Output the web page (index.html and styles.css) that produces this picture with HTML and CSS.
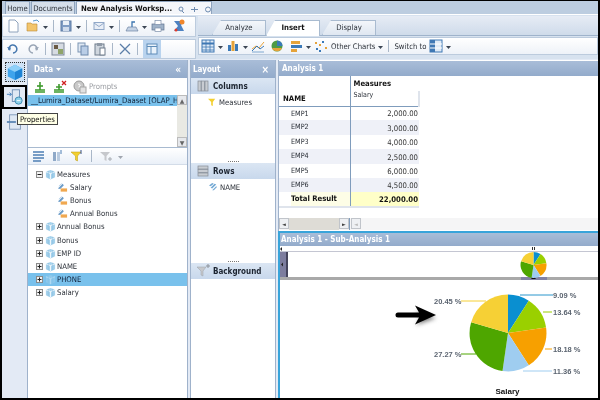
FILE: index.html
```html
<!DOCTYPE html>
<html lang="en">
<head>
<meta charset="utf-8">
<title>New Analysis Workspace</title>
<link rel="stylesheet" href="styles.css">
</head>
<body>
<svg class="sprites" width="0" height="0" aria-hidden="true">
  <defs>
    <symbol id="cube" viewBox="0 0 12 12"><path d="M1 3l5-2 5 2v6l-5 2.500-5-2.500z" fill="#a6d2ec"/><path d="M1 3l5 2 5-2M6 5v6" stroke="#fff" stroke-width=".9" fill="none"/><path d="M3.500 2v8M8.500 2v8" stroke="#7db8dc" stroke-width=".6"/></symbol>
    <symbol id="measure" viewBox="0 0 12 12"><path d="M1 7l5-5 1.500 1.500-4 4z" fill="#6c9cc8"/><path d="M2 4.500l3-3" stroke="#b9d3ea"/><rect x="4" y="7" width="7" height="3.500" fill="#f0a850"/></symbol>
    <symbol id="arrowd" viewBox="0 0 5 3"><path d="M0 0h5L2.500 3z" fill="#3c4654"/></symbol>
    <symbol id="plus" viewBox="0 0 7 7"><rect x=".5" y=".5" width="6" height="6" fill="#f2f2f2" stroke="#8a8a8a"/><path d="M1.500 3.500h4M3.500 1.500v4" stroke="#222"/></symbol>
    <symbol id="minus" viewBox="0 0 7 7"><rect x=".5" y=".5" width="6" height="6" fill="#f2f2f2" stroke="#8a8a8a"/><path d="M1.500 3.500h4" stroke="#222"/></symbol>
    <symbol id="pie" viewBox="-104 -104 208 208">
      <path d="M0 0V-100A100 100 0 0 1 54-84.100z" fill="#0a8fd0"/>
      <path d="M0 0L54-84.100A100 100 0 0 1 99-14.300z" fill="#9ad000"/>
      <path d="M0 0L99-14.300A100 100 0 0 1 54 84.100z" fill="#f7a000"/>
      <path d="M0 0L54 84.100A100 100 0 0 1-14.300 99z" fill="#9fcdf0"/>
      <path d="M0 0L-14.300 99A100 100 0 0 1-95.900-28.200z" fill="#4ea600"/>
      <path d="M0 0L-95.900-28.200A100 100 0 0 1 0-100z" fill="#f6d035"/>
    </symbol>
  </defs>
</svg>
<div class="app">
  <header class="tabs">
    <span class="tab tab-home">Home</span>
    <span class="tab tab-docs">Documents</span>
    <span class="tab tab-active"><b>New Analysis Worksp...</b>
      <svg class="tab-ic" viewBox="0 0 36 7"><circle cx="3" cy="3" r="2" fill="none" stroke="#6d8bb0"/><path d="M4 5l2 2" stroke="#6d8bb0"/><path d="M13 3.500h7M16.500 1v5" stroke="#6d8bb0"/><circle cx="30" cy="3.500" r="2.500" fill="none" stroke="#6d8bb0"/></svg>
    </span>
  </header>

  <section class="tools">
    <div class="tools-left">
      <div class="bar">
        <svg class="ic" viewBox="0 0 14 14"><path d="M3 1h6l3 3v9H3z" fill="#fff" stroke="#8ea2bc"/></svg>
        <svg class="ic ic-gap" viewBox="0 0 14 14"><path d="M1 12V4h4l1 1h5v7z" fill="#f3c56c" stroke="#b8893a" stroke-width=".6"/><path d="M7 2l4-1 2 2" stroke="#5a9ad0" fill="none"/></svg>
        <svg class="ar"><use href="#arrowd"/></svg><i class="sep"></i>
        <svg class="ic" viewBox="0 0 14 14"><rect x="2" y="2" width="10" height="10" fill="#7f9cc4" stroke="#5d7ba4"/><rect x="4" y="2" width="6" height="4" fill="#eaf0f8"/><rect x="4" y="8" width="6" height="4" fill="#cfdbec"/></svg>
        <svg class="ar"><use href="#arrowd"/></svg><i class="sep"></i>
        <svg class="ic" viewBox="0 0 14 14"><rect x="2" y="3.500" width="10" height="7" fill="#e9eef6" stroke="#91a8c8"/><path d="M2 4l5 3.500L12 4" fill="none" stroke="#91a8c8"/></svg>
        <svg class="ar"><use href="#arrowd"/></svg><i class="sep"></i>
        <svg class="ic" viewBox="0 0 14 14"><path d="M1 12l2-4h8l2 4z" fill="#c4d2e4" stroke="#6d84a4" stroke-width=".7"/><path d="M7 8V3h3" stroke="#3c76b0" fill="none" stroke-width="1.300"/></svg>
        <svg class="ar"><use href="#arrowd"/></svg>
        <svg class="ic ic-print" viewBox="0 0 14 14"><rect x="1" y="5" width="12" height="6" fill="#9fb2c8" stroke="#5f7390" stroke-width=".7"/><rect x="4" y="1.500" width="6" height="4" fill="#fff" stroke="#7b8ea8" stroke-width=".7"/><rect x="4" y="9" width="6" height="3.500" fill="#fff" stroke="#7b8ea8" stroke-width=".7"/></svg>
        <svg class="ic ic-wiz" viewBox="0 0 14 14"><path d="M2 2h10L9 6l3 6H2l4-5z" fill="#4d82c2"/><circle cx="10" cy="3" r="2.500" fill="#f0862a"/><circle cx="4" cy="11" r="1.500" fill="#e23a2a"/></svg>
      </div>
      <div class="bar">
        <svg class="ic" viewBox="0 0 14 14"><path d="M3 8a4 4 0 1 1 4 3" fill="none" stroke="#4577ae" stroke-width="1.500"/><path d="M1 5l4 .5-1 3.500z" fill="#4577ae"/></svg>
        <svg class="ic ic-gap" viewBox="0 0 14 14"><path d="M11 8a4 4 0 1 0-4 3" fill="none" stroke="#9aa6b6" stroke-width="1.500"/><path d="M13 5l-4 .5 1 3.500z" fill="#9aa6b6"/></svg>
        <i class="sep"></i>
        <svg class="ic" viewBox="0 0 14 14"><rect x="1" y="1" width="12" height="12" fill="#d6dbe2" stroke="#7c8797"/><rect x="3" y="3" width="4" height="4" fill="#6a5a44"/><rect x="7" y="7" width="5" height="5" fill="#8fa46a"/></svg>
        <i class="sep"></i>
        <svg class="ic" viewBox="0 0 14 14"><rect x="2" y="1" width="7" height="9" fill="#dfe8f3" stroke="#7c95b4"/><rect x="5" y="4" width="7" height="9" fill="#b9cde6" stroke="#6d88ab"/></svg>
        <svg class="ic" viewBox="0 0 14 14"><rect x="2" y="2" width="9" height="11" fill="#cfd6de" stroke="#6f7c8c"/><rect x="4" y="1" width="5" height="3" fill="#8e99a6"/><rect x="7" y="6" width="5" height="7" fill="#fff" stroke="#6f7c8c"/></svg>
        <i class="sep"></i>
        <svg class="ic" viewBox="0 0 14 14"><path d="M2 2l10 10M12 2L2 12" stroke="#5b7ea8" stroke-width="1.300"/></svg>
        <i class="sep"></i>
        <span class="toggled"><svg class="ic" viewBox="0 0 14 14"><rect x="2" y="2" width="10" height="10" fill="#e9f2fb" stroke="#5e8cb8"/><path d="M2 4.500h10M6 4.500V12" stroke="#5e8cb8"/></svg></span>
      </div>
    </div>
    <div class="tools-right">
      <nav class="ribbon-tabs">
        <span class="rtab">Analyze</span>
        <span class="rtab rtab-active">Insert</span>
        <span class="rtab">Display</span>
      </nav>
      <div class="bar bar-wide">
        <svg class="ic" viewBox="0 0 14 14"><rect x="1" y="1" width="12" height="12" fill="#dfeaf6" stroke="#3f78b4"/><path d="M1 4.500h12" stroke="#3f78b4" stroke-width="2"/><path d="M1 8h12M1 11h12M5 1v12M9 1v12" stroke="#3f78b4" stroke-width=".8"/></svg>
        <svg class="ar"><use href="#arrowd"/></svg>
        <svg class="ic" viewBox="0 0 14 14"><rect x="2" y="6" width="3" height="6" fill="#3a79b8"/><rect x="5.500" y="2" width="3" height="10" fill="#e5a33a"/><rect x="9" y="5" width="3" height="7" fill="#3a79b8"/></svg>
        <svg class="ar"><use href="#arrowd"/></svg>
        <svg class="ic" viewBox="0 0 14 14"><path d="M1 10l4-3 3 2 5-6" fill="none" stroke="#e8a33a"/><path d="M1 12l5-5 3 3 4-3" fill="none" stroke="#3a79b8"/><path d="M1 13h12" stroke="#7fa8d0"/></svg>
        <svg class="ic ic-sp" viewBox="0 0 14 14"><circle cx="7" cy="7" r="5.500" fill="#4d9a44"/><path d="M7 7V1.500A5.500 5.500 0 0 1 12.500 7z" fill="#3a79b8"/><path d="M2 9h10a5.500 5.500 0 0 1-10 0z" fill="#e5a33a"/></svg>
        <svg class="ic ic-sp" viewBox="0 0 14 14"><rect x="2" y="2" width="9" height="3" fill="#e5a33a"/><rect x="2" y="6" width="11" height="3" fill="#3a79b8"/><rect x="2" y="10" width="6" height="3" fill="#e5a33a"/></svg>
        <svg class="ar"><use href="#arrowd"/></svg>
        <svg class="ic" viewBox="0 0 14 14"><g fill="#3a79b8"><rect x="2" y="9" width="2" height="2"/><rect x="8" y="2" width="2" height="2"/><rect x="5" y="11" width="2" height="2"/></g><g fill="#e5a33a"><rect x="5" y="5" width="2" height="2"/><rect x="11" y="8" width="2" height="2"/><rect x="1" y="3" width="2" height="2"/></g></svg>
        <span class="bar-label">Other Charts</span>
        <svg class="ar"><use href="#arrowd"/></svg><i class="sep"></i>
        <span class="bar-label">Switch to</span>
        <svg class="ic" viewBox="0 0 14 14"><rect x="1" y="1" width="12" height="12" fill="#dfeaf6" stroke="#3f78b4"/><rect x="1" y="1" width="5" height="12" fill="#3f78b4"/><path d="M1 5h12M1 9h12" stroke="#fff"/></svg>
        <svg class="ar"><use href="#arrowd"/></svg>
      </div>
    </div>
  </section>

  <main class="main">
    <aside class="rail">
      <span class="rail-btn rail-cube"><svg viewBox="0 0 20 20"><path d="M2 6l8-4 8 4v9l-8 4-8-4z" fill="#3fa4ec"/><path d="M2 6l8 4 8-4-8-4z" fill="#8fd0f8"/><path d="M10 10v9l8-4V6z" fill="#1f84d4"/></svg></span>
      <span class="rail-btn rail-sel"><svg viewBox="0 0 20 20"><rect x="7" y="2" width="8" height="13" fill="#dfe8f3" stroke="#6d8db4"/><path d="M1 7h5M4 5l2 2-2 2" stroke="#3a79b8" fill="none"/><circle cx="14" cy="14" r="4" fill="#8fd0e8" stroke="#3a88b0"/><path d="M12 14h4" stroke="#fff"/></svg></span>
      <span class="rail-btn rail-last"><svg viewBox="0 0 20 20"><rect x="4" y="2" width="12" height="16" fill="#dfe8f3" stroke="#7e97b8"/><path d="M1 10h10" stroke="#5c86b4" stroke-width="2"/></svg></span>
    </aside>

    <section class="panel data">
      <h2 class="phead">Data <svg class="caret" viewBox="0 0 5 3"><path d="M0 0h5L2.500 3z" fill="#fff"/></svg><span class="ph-act">«</span></h2>
      <div class="subbar">
        <svg class="ic" viewBox="0 0 14 14"><path d="M7 2v8M2 10h10M2 12h10" stroke="#3f9a2e" stroke-width="1.600"/><path d="M4 6h6" stroke="#3f9a2e" stroke-width="1.600"/></svg>
        <svg class="ic" viewBox="0 0 14 14"><path d="M6 4v6M1 10h10M1 12h10M3 7h6" stroke="#3f9a2e" stroke-width="1.600"/><path d="M9 1l4 4M13 1L9 5" stroke="#d02020" stroke-width="1.300"/></svg>
        <span class="prompts"><svg class="ic" viewBox="0 0 14 14"><circle cx="6" cy="6" r="5" fill="#c9c9c9" stroke="#9a9a9a"/><rect x="7" y="7" width="6" height="6" fill="#e2e2e2" stroke="#a6a6a6"/><path d="M5 4.500a1.200 1.200 0 1 1 1 2v1" stroke="#fff" fill="none"/></svg>Prompts</span>
      </div>
      <div class="sources">
        <div class="source">__Lumira_Dataset/Lumira_Daaset [OLAP_H</div>
        <div class="vscroll"><i class="sb-btn">▲</i><i class="sb-track"></i><i class="sb-btn">▼</i></div>
      </div>
      <div class="subbar subbar-b">
        <svg class="ic" viewBox="0 0 14 14"><path d="M1 3h11M1 6h11M1 9h11M1 12h8" stroke="#4d7fb4" stroke-width="1.300"/></svg>
        <svg class="ic" viewBox="0 0 14 14"><rect x="2" y="3" width="3" height="9" fill="#8fa9c8"/><rect x="6" y="3" width="3" height="9" fill="#b8cadf"/><path d="M10 1v4" stroke="#4d7fb4"/></svg>
        <svg class="ic" viewBox="0 0 14 14"><path d="M1 3h10L7.500 7v5l-2-1V7z" fill="#f3cf2f" stroke="#b99a10" stroke-width=".5"/><path d="M11 1v4" stroke="#36528a"/></svg>
        <i class="sep"></i>
        <svg class="ic" viewBox="0 0 14 14"><path d="M1 3h10L7.500 7v5l-2-1V7z" fill="#c6c8cc"/><path d="M9 10h4M11 8v4" stroke="#a8acb2"/></svg>
        <svg class="ar ar-faint"><use href="#arrowd"/></svg>
      </div>
      <ul class="tree">
        <li class="row"><svg class="tg"><use href="#minus"/></svg><svg class="node"><use href="#cube"/></svg>Measures</li>
        <li class="row child"><svg class="node"><use href="#measure"/></svg>Salary</li>
        <li class="row child"><svg class="node"><use href="#measure"/></svg>Bonus</li>
        <li class="row child"><svg class="node"><use href="#measure"/></svg>Annual Bonus</li>
        <li class="row"><svg class="tg"><use href="#plus"/></svg><svg class="node"><use href="#cube"/></svg>Annual Bonus</li>
        <li class="row"><svg class="tg"><use href="#plus"/></svg><svg class="node"><use href="#cube"/></svg>Bonus</li>
        <li class="row"><svg class="tg"><use href="#plus"/></svg><svg class="node"><use href="#cube"/></svg>EMP ID</li>
        <li class="row"><svg class="tg"><use href="#plus"/></svg><svg class="node"><use href="#cube"/></svg>NAME</li>
        <li class="row row-sel"><svg class="tg"><use href="#plus"/></svg><svg class="node"><use href="#cube"/></svg>PHONE</li>
        <li class="row"><svg class="tg"><use href="#plus"/></svg><svg class="node"><use href="#cube"/></svg>Salary</li>
      </ul>
    </section>

    <section class="panel layout">
      <h2 class="phead phead-l">Layout<span class="ph-act">×</span></h2>
      <div class="lsec lsec-cols">
        <h3 class="lhead"><svg class="ic" viewBox="0 0 14 14"><rect x="2" y="2" width="3" height="10" fill="#c8ccd2" stroke="#858c96" stroke-width=".7"/><rect x="5.500" y="2" width="3" height="10" fill="#c8ccd2" stroke="#858c96" stroke-width=".7"/><rect x="9" y="2" width="3" height="10" fill="#c8ccd2" stroke="#858c96" stroke-width=".7"/></svg>Columns</h3>
        <div class="litem"><svg class="lic" viewBox="0 0 10 10"><path d="M0 1h9L6 5v5L4 9V5z" fill="#f3cf2f"/></svg>Measures</div>
        <i class="dots"></i>
      </div>
      <div class="lsec lsec-rows">
        <h3 class="lhead"><svg class="ic" viewBox="0 0 14 14"><rect x="2" y="2" width="10" height="3" fill="#c8ccd2" stroke="#858c96" stroke-width=".7"/><rect x="2" y="5.500" width="10" height="3" fill="#c8ccd2" stroke="#858c96" stroke-width=".7"/><rect x="2" y="9" width="10" height="3" fill="#c8ccd2" stroke="#858c96" stroke-width=".7"/></svg>Rows</h3>
        <div class="litem litem-n"><svg class="lic" viewBox="0 0 10 10"><path d="M0 3l4-3 2 1-4 3zM2 6l5-5 2 1-5 5zM4 9l5-5 1 1-4 4z" fill="#72a8d4"/></svg>NAME</div>
        <i class="dots"></i>
      </div>
      <div class="lsec">
        <h3 class="lhead"><svg class="ic" viewBox="0 0 14 14"><path d="M1 3h9L7 7v5l-2-1V7z" fill="#c6c8cc" stroke="#9aa0a8" stroke-width=".5"/><path d="M10 2h4M12 0v4" stroke="#8c929a"/></svg>Background</h3>
      </div>
    </section>

    <section class="panel analysis">
      <h2 class="phead phead-a">Analysis 1</h2>
      <div class="crosstab">
        <table class="grid">
          <thead>
            <tr><th class="t-name" rowspan="2">NAME</th><th class="t-meas">Measures</th></tr>
            <tr><th class="t-sal">Salary</th></tr>
          </thead>
          <tbody>
            <tr><td>EMP1</td><td>2,000.00</td></tr>
            <tr><td>EMP2</td><td>3,000.00</td></tr>
            <tr><td>EMP3</td><td>4,000.00</td></tr>
            <tr><td>EMP4</td><td>2,500.00</td></tr>
            <tr><td>EMP5</td><td>6,000.00</td></tr>
            <tr><td>EMP6</td><td>4,500.00</td></tr>
            <tr class="total"><td>Total Result</td><td>22,000.00</td></tr>
          </tbody>
        </table>
        <div class="hscroll">
          <div class="hs-left"><i class="hs-btn">◄</i><i class="hs-track"></i><i class="hs-btn">►</i></div>
          <div class="hs-right"><i class="hs-btn hs-off">◄</i></div>
        </div>
      </div>
      <div class="sub">
        <h2 class="phead phead-s">Analysis 1 - Sub-Analysis 1</h2>
        <svg class="chart" viewBox="280 246 318 152">
          <rect x="280" y="251" width="318" height="1" fill="#c4c6d2"/>
          <path d="M280 249l2-2v4z" fill="#222"/>
          <path d="M532 247h1v3h-1zM534 247h1v3h-1z" fill="#333"/>
          <rect x="280" y="252" width="6" height="25" fill="#7d7d9e"/>
          <rect x="286" y="252" width="2" height="25" fill="#45455c"/>
          <path d="M281 264.500l2-2v4z" fill="#222"/>
          <rect x="280" y="277" width="318" height="3" fill="#a9a9a9"/>
          <rect x="521" y="277" width="26" height="3" fill="#8282a4"/>
          <path d="M533.500 276l2.500 3h-5z" fill="#111"/>
          <use href="#pie" x="520" y="251.500" width="27" height="27"/>
          <g fill="none">
            <path d="M520 295h33" stroke="#2a96cc"/>
            <path d="M543 312h9" stroke="#9ad000"/>
            <path d="M545 349h7" stroke="#f7a000"/>
            <path d="M523 371h29" stroke="#9fcdf0"/>
            <path d="M461 354h15" stroke="#4ea600"/>
            <path d="M461 301h25" stroke="#f6d035"/>
          </g>
          <use href="#pie" x="468" y="293" width="80" height="80"/>
          <g class="lbl">
            <text x="553" y="298">9.09 %</text>
            <text x="553" y="315">13.64 %</text>
            <text x="553" y="352">18.18 %</text>
            <text x="553" y="374">11.36 %</text>
            <text x="434" y="304">20.45 %</text>
            <text x="434" y="357">27.27 %</text>
          </g>
          <text class="cap" x="507.500" y="394" text-anchor="middle">Salary</text>
          <path class="shadow" d="M398 318h23l-5 7 20-7-20-7 5 7" fill="#777"/>
          <path d="M398 312.500h21l-4-7 21 9.500-21 9.500 4-7h-21a2.500 2.500 0 0 1 0-5z" fill="#000"/>
        </svg>
      </div>
    </section>
  </main>
  <div class="tooltip">Properties</div>
</div>
</body>
</html>
```
FILE: styles.css
```css
* { box-sizing: border-box; }
html, body { margin: 0; padding: 0; width: 600px; height: 400px; overflow: hidden; background: #000; }
.sprites { position: absolute; }
.app {
  position: relative;
  width: 600px; height: 400px;
  border: 1.5px solid #000;
  border-width: 1px 2px 2px 2px;
  background: #e3eaf5;
  font: 7.7px "DejaVu Sans", sans-serif;
  font-stretch: condensed;
  color: #2b3038;
  display: flex; flex-direction: column;
  filter: blur(.3px);
  overflow: hidden;
}
svg { display: block; flex: none; }

/* window tabs */
.tabs { height: 14px; flex: none; display: flex; align-items: stretch; gap: 1px; padding-left: 3px; background: #bccde0; border-bottom: 1px solid #fff; }
.tab { padding: 2px 0 0; text-align: center; background: #d4deea; border: 1px solid #8ea3bd; border-bottom: 0; white-space: nowrap; }
.tab-home { width: 25px; }
.tab-docs { width: 44px; }
.tab-active { width: 136px; background: #f4f6fa; display: flex; align-items: flex-start; gap: 6px; color: #111; padding-left: 4px; }
.tab-ic { width: 36px; height: 7px; margin-top: 2px; }

/* toolbars */
.tools { height: 44px; flex: none; display: flex; gap: 2px; background: #d7e2ef; }
.tools-left { width: 194px; flex: none; display: flex; flex-direction: column; gap: 2px; padding-top: 1px; }
.tools-right { flex: 1; display: flex; flex-direction: column; gap: 1px; }
.bar { flex: 1; display: flex; align-items: center; gap: 3px; padding-left: 3px; background: linear-gradient(#fff, #eef2f8); border: 1px solid #bccbdd; }
.bar-wide { padding-left: 2px; flex: none; height: 18px; }
.ic { width: 14px; height: 14px; }
.ic-gap { margin-left: 3px; }
.ic-print { margin-left: 1px; }
.ic-wiz { margin-left: 4px; }
.ic-sp { margin-left: 2px; }
.ar { width: 5px; height: 3px; margin-top: 2px; }
.ar-faint { opacity: .45; }
.sep { width: 1px; height: 12px; background: #a9b7c8; margin: 0 2px; flex: none; }
.toggled { padding: 2px 2px; background: #b9d3ee; }
.bar-label { white-space: nowrap; }
.ribbon-tabs { height: 20px; flex: none; display: flex; align-items: flex-end; padding: 0 0 0 14px; background: linear-gradient(#e6ecf5, #cfdbea); border-bottom: 1px solid #9fb3cb; margin-top: 1px; }
.rtab { width: 54px; height: 15px; text-align: center; padding-top: 2px; background: linear-gradient(#f3f6fa, #dfe7f1); border: 1px solid #a9bbd0; border-bottom: 0; clip-path: polygon(9px 0, 100% 0, 100% 100%, 0 100%); }
.rtab-active { background: #fff; font-weight: 700; color: #111; margin-bottom: -1px; height: 16px; }
.rtab + .rtab + .rtab { margin-left: 2px; }

/* main */
.main { flex: 1; min-height: 0; display: grid; grid-template-columns: 23px 161px 86px 1fr; column-gap: 2px; padding-top: 1px; background: #e3eaf5; }
.panel { display: flex; flex-direction: column; min-height: 0; min-width: 0; background: #fff; border-left: 1px solid #9fb2cb; border-right: 1px solid #9fb2cb; }
.phead { margin: 0; height: 18px; flex: none; display: flex; align-items: center; gap: 3px; padding-left: 6px; font-size: 8px; font-weight: 700; color: #fff; background: linear-gradient(#a9bdd8, #93abcb); }
.phead-l { padding-left: 2px; }
.ph-act { margin-left: auto; margin-right: 6px; font-size: 10px; }
.caret { width: 5px; height: 3px; }

/* rail */
.rail { display: flex; flex-direction: column; align-items: center; gap: 3px; padding-top: 2px; margin-right: -2px; }
.rail-btn { width: 20px; height: 20px; display: block; padding: 0; }
.rail-btn svg { width: 18px; height: 18px; margin: 0 auto; }
.rail-cube { border: 1px dotted #333; background: #cfe3f6; }
.rail-sel { outline: 2px solid #000; width: 21px; height: 20px; padding-top: 1px; background: #e3eaf5; margin-top: 2px; }
.rail-last { margin-top: 3px; }

/* data */
.subbar { height: 17px; flex: none; display: flex; align-items: center; gap: 6px; padding-left: 5px; background: #fff; }
.subbar-b { height: 18px; gap: 5px; padding-left: 4px; background: linear-gradient(#fff, #eaf0f8); border-top: 1px solid #a8bad0; border-bottom: 1px solid #d3dce8; }
.prompts { display: flex; align-items: center; gap: 2px; color: #9a9da2; }
.sources { height: 52px; flex: none; display: flex; }
.source { flex: 1; min-width: 0; height: 11px; background: #79c1ec; color: #102035; white-space: nowrap; overflow: hidden; padding-left: 3px; line-height: 11px; }
.vscroll { width: 10px; flex: none; display: flex; flex-direction: column; background: #e9e9e3; }
.sb-btn { height: 10px; font: 6px/10px "DejaVu Sans", sans-serif; text-align: center; background: #e6e8ec; color: #666; border: 1px solid #bbb; }
.sb-track { flex: 1; }
.tree { list-style: none; margin: 0; padding: 2.500px 0 0; flex: 1; }
.row { height: 13.2px; display: flex; align-items: center; padding-left: 8px; white-space: nowrap; }
.tg { width: 7px; height: 7px; margin-right: 2px; }
.node { width: 11px; height: 11px; margin-right: 1px; }
.child { padding-left: 29px; }
.child .node { margin-right: 2px; }
.row-sel { background: #79c1ec; color: #10203a; }
.row-sel .node { opacity: .45; }

/* layout */
.lsec { display: flex; flex-direction: column; flex: none; }
.lsec-cols { height: 85px; }
.lsec-rows { height: 100px; }
.lhead { margin: 0; height: 16px; flex: none; display: flex; align-items: center; gap: 3px; padding-left: 5px; font-size: 8px; font-weight: 700; color: #1c2430; background: linear-gradient(#dbe6f3, #c8d8ec); }
.litem { display: flex; align-items: center; gap: 3px; padding: 1px 0 0 17px; height: 15px; }
.litem-n { padding-left: 18px; }
.lic { width: 8px; height: 8px; }
.dots { margin: auto auto 1px; width: 11px; height: 3px; border-bottom: 1px dotted #777; }

/* analysis */
.analysis { border-right: 0; }
.phead-a { height: 15px; padding-left: 3px; margin-top: 1px; }
.crosstab { flex: 1; min-height: 0; display: flex; flex-direction: column; background: #fff; }
.grid { border-collapse: collapse; table-layout: fixed; width: 141px; }
.grid th { text-align: left; font-weight: 400; padding: 0; }
.t-name { width: 71px; vertical-align: bottom; font-weight: 700 !important; padding: 0 0 3px 4px !important; height: 30px; color: #111; border-right: 1px solid #7f9cbc; border-bottom: 1px solid #7f9cbc; }
.t-meas { height: 15px; font-weight: 700 !important; padding: 0 0 0 3px !important; color: #111; }
.t-sal { height: 15px; padding: 0 0 5px 3px !important; font-size: 7px; border-bottom: 1px solid #7f9cbc; border-right: 2px solid #dfe4ec; vertical-align: top; }
.grid td { height: 14.4px; padding: 0; line-height: 13px; }
.grid td:first-child { padding-left: 12px; border-right: 1px solid #7f9cbc; vertical-align: top; font-size: 7.2px; }
.grid td:last-child { text-align: right; padding-right: 1px; vertical-align: bottom; color: #333; }
.grid tbody tr:nth-child(even) td { background: #eff1f8; }
.grid .total td { background: #fdfde6; font-weight: 700; color: #111; border-bottom: 2px solid #dfe4ec; }
.grid .total td:first-child { font-size: 7.7px; background: linear-gradient(90deg, #fff 12px, #fdfde6 12px); }
.grid .total td:last-child { background: #ffffc8; }
.hscroll { margin-top: 10px; height: 12px; display: flex; background: #f5f5f6; }
.hs-left { width: 71px; display: flex; border-right: 1px solid #7f9cbc; }
.hs-right { flex: 1; display: flex; padding-left: 1px; }
.hs-btn { width: 10px; height: 11px; font: 5px/10px "DejaVu Sans", sans-serif; text-align: center; background: #eef0f3; color: #444; border: 1px solid #c0c4ca; flex: none; }
.hs-off { color: #bbb; }
.hs-track { flex: 1; background: #dedcd6; }
.sub { height: 167px; flex: none; display: flex; flex-direction: column; border-top: 2px solid #39a4da; border-left: 2px solid #39a4da; margin-left: -1px; }
.phead-s { height: 13px; padding-left: 1px; }
.chart { width: 318px; height: 152px; }
.lbl text { font: 700 7.5px "Liberation Sans", sans-serif; fill: #5b6470; }
.cap { font: 700 8px "Liberation Sans", sans-serif; fill: #111; }
.shadow { filter: blur(2px); }

/* tooltip */
.tooltip { position: absolute; left: 15px; top: 112px; height: 12px; padding: 0 2px; line-height: 11px; background: #ffffe6; border: 1px solid #444; color: #111; white-space: nowrap; }
```
